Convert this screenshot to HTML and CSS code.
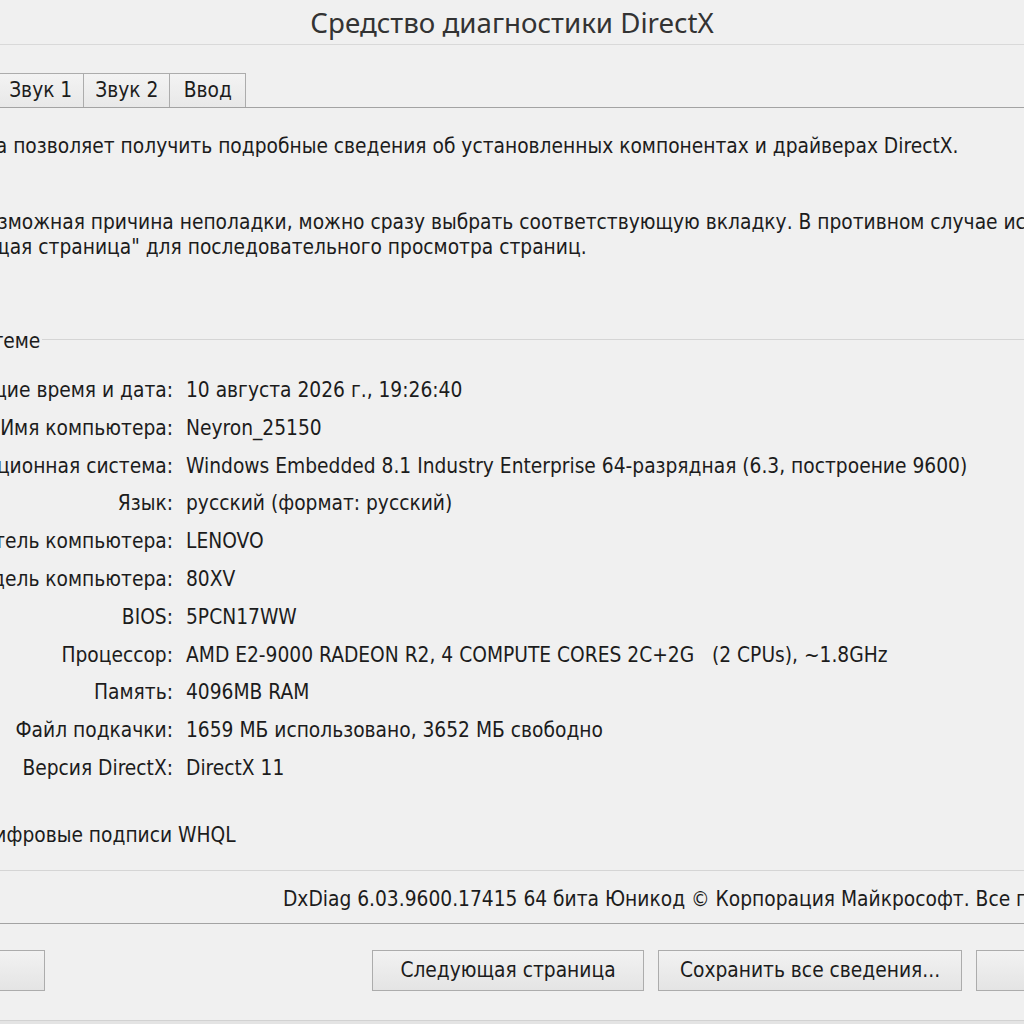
FILE: index.html
```html
<!DOCTYPE html>
<html lang="ru">
<head>
  <meta charset="UTF-8" />
  <title>Средство диагностики DirectX</title>
  <link rel="stylesheet" href="styles.css">
</head>
<body>
  <div class="window">
    <div class="titlebar">Средство диагностики DirectX</div>

    <!-- Tab strip, the first tab is the active one -->
    <div class="tabs">
      <div class="tab active">Система</div>
      <div class="tab">Экран</div>
      <div class="tab">Звук 1</div>
      <div class="tab">Звук 2</div>
      <div class="tab">Ввод</div>
    </div>

    <div class="panel">
      <p class="intro">Данная программа позволяет получить подробные сведения об установленных компонентах и драйверах DirectX.</p>
      <p class="intro second">Если известна возможная причина неполадки, можно сразу выбрать соответствующую вкладку. В противном случае используйте<br>кнопку "Следующая страница" для последовательного просмотра страниц.</p>

      <fieldset class="sysinfo">
        <legend>Сведения о системе</legend>
        <div class="rows">
          <div class="label">Текущие время и дата:</div><div class="value">10 августа 2026 г., 19:26:40</div>
          <div class="label">Имя компьютера:</div><div class="value">Neyron_25150</div>
          <div class="label">Операционная система:</div><div class="value">Windows Embedded 8.1 Industry Enterprise 64-разрядная (6.3, построение 9600)</div>
          <div class="label">Язык:</div><div class="value">русский (формат: русский)</div>
          <div class="label">Изготовитель компьютера:</div><div class="value">LENOVO</div>
          <div class="label">Модель компьютера:</div><div class="value">80XV</div>
          <div class="label">BIOS:</div><div class="value">5PCN17WW</div>
          <div class="label">Процессор:</div><div class="value">AMD E2-9000 RADEON R2, 4 COMPUTE CORES 2C+2G   (2 CPUs), ~1.8GHz</div>
          <div class="label">Память:</div><div class="value">4096MB RAM</div>
          <div class="label">Файл подкачки:</div><div class="value">1659 МБ использовано, 3652 МБ свободно</div>
          <div class="label">Версия DirectX:</div><div class="value">DirectX 11</div>
        </div>
        <label class="check"><input type="checkbox" checked> Проверять цифровые подписи WHQL</label>
      </fieldset>

      <div class="copyright">DxDiag 6.03.9600.17415 64 бита Юникод © Корпорация Майкрософт. Все права защищены.</div>
    </div>

    <div class="buttons">
      <button class="btn help">Справка</button>
      <div class="btn-group">
        <button class="btn next">Следующая страница</button>
        <button class="btn save">Сохранить все сведения...</button>
        <button class="btn exit">Выход</button>
      </div>
    </div>
  </div>
</body>
</html>
```
FILE: styles.css
```css
/* DxDiag dialog, window is wider than the viewport */
body {
  margin: 0;
  overflow: hidden;
  background: #e4e4e4;
  font-family: "DejaVu Sans Condensed", "DejaVu Sans", sans-serif;
  font-size: 20.75px;
  color: #1c1c1c;
}

.window {
  width: 1424px;
  height: 1020px;
  margin-left: -200px;
  background: #f0f0f0;
  border-bottom: 1px solid #d2d2d2;
}

.titlebar {
  height: 44px;
  line-height: 44px;
  text-align: center;
  font-family: "Noto Sans", sans-serif;
  font-size: 27.7px;
  color: #333;
  border-bottom: 1px solid #d9d9d9;
}

/* Tabs */
.tabs {
  display: flex;
  height: 34px;
  margin: 28px 0 0 8px;
}

.tab {
  box-sizing: border-box;
  min-width: 77px;
  padding: 0 11px;
  line-height: 33px;
  text-align: center;
  border: 1px solid #acacac;
  border-bottom: none;
  margin-right: -1px;
  background: linear-gradient(#f3f3f3, #e8e8e8);
  white-space: nowrap;
}

.tab.active {
  background: #f0f0f0;
}

.panel {
  margin: 0 8px;
  padding: 25.5px 23px 10.5px 24px;
  border: 1px solid #a3a3a3;
  border-left: none;
  border-right: none;
}

.intro {
  margin: 0;
  line-height: 25px;
  text-indent: -12px;
  white-space: nowrap;
}

.intro.second {
  margin-top: 51px;
  text-indent: -4px;
}

/* System info group box */
.sysinfo {
  margin: 65px 0 0;
  padding: 18.5px 0 21.5px 6px;
  min-width: 0;
  border: 1px solid #d5d5d5;
  border-right: none;
}

.sysinfo legend {
  padding: 4px 2px 0;
  line-height: 25px;
}

.rows {
  display: grid;
  grid-template-columns: 334px 1fr;
  column-gap: 13px;
}

.label,
.value {
  line-height: 37.8px;
  white-space: pre;
}

.label {
  text-align: right;
}

.check {
  display: block;
  margin-top: 35.7px;
  line-height: 25px;
  white-space: nowrap;
}

.check input {
  width: 20px;
  height: 20px;
  margin: 0 6px 0 0;
  vertical-align: -3px;
}

.copyright {
  margin-top: 16.5px;
  line-height: 25px;
  text-align: right;
  white-space: pre;
}

/* Bottom buttons */
.buttons {
  display: flex;
  margin-top: 26px;
  padding: 0 88px 0 45px;
}

.btn-group {
  display: flex;
  gap: 14px;
  margin-left: auto;
}

.btn {
  height: 41px;
  padding: 0;
  font: inherit;
  color: #1c1c1c;
  border: 1px solid #acacac;
  background: linear-gradient(#f2f2f2, #e4e4e4);
}

.help {
  width: 200px;
}

.exit {
  width: 160px;
}

.next {
  width: 272px;
}

.save {
  width: 304px;
}
```
